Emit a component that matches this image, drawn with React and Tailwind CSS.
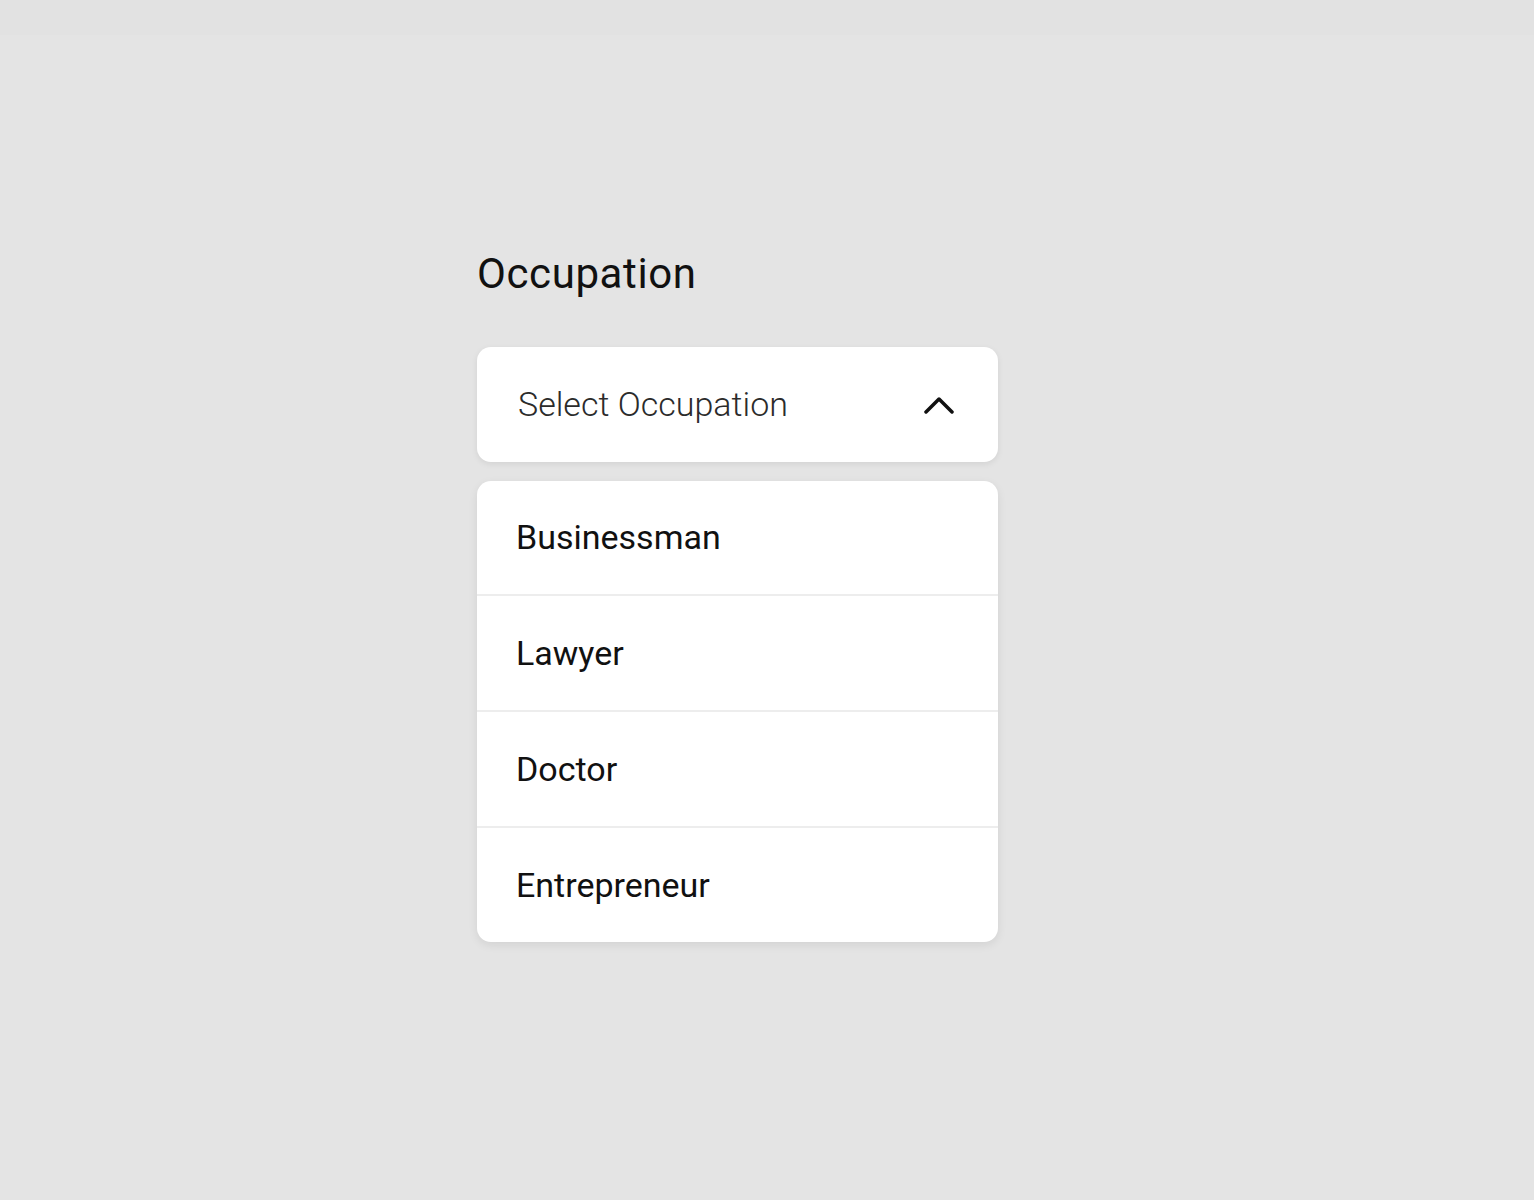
const options = ["Businessman", "Lawyer", "Doctor", "Entrepreneur"];

function App() {
  return (
    <div className="min-h-screen bg-[#e4e4e4] font-['Roboto',sans-serif]">
      <div className="h-[35px] bg-[#e2e2e2]"></div>
      <div className="ml-[477px] w-[521px] pt-[218px]">
        <h1 className="text-[42px] leading-none tracking-[0.6px] text-[#111]">
          Occupation
        </h1>
        <button className="mt-[52px] flex h-[115px] w-full items-center justify-between rounded-[14px] bg-white pl-[41px] pr-[44px] shadow-[0_2px_6px_rgba(0,0,0,0.08)]">
          <span className="text-[34px] font-light text-[#2b2b2b]">
            Select Occupation
          </span>
          <svg width="30" height="18" viewBox="0 0 30 18" fill="none">
            <polyline
              points="2,16 15,3 28,16"
              stroke="#111"
              strokeWidth="3.5"
              strokeLinecap="round"
              strokeLinejoin="round"
            />
          </svg>
        </button>
        <ul className="mt-[19px] overflow-hidden rounded-[14px] bg-white shadow-[0_3px_10px_rgba(0,0,0,0.08)]">
          {options.map((o, i) => (
            <li
              key={o}
              className={
                "flex items-center pl-[39px] text-[34px] text-[#111] " +
                (i > 0 ? "h-[116px] border-t-2 border-[#ededed]" : "h-[113px]")
              }
            >
              {o}
            </li>
          ))}
        </ul>
      </div>
    </div>
  );
}

export default App;
